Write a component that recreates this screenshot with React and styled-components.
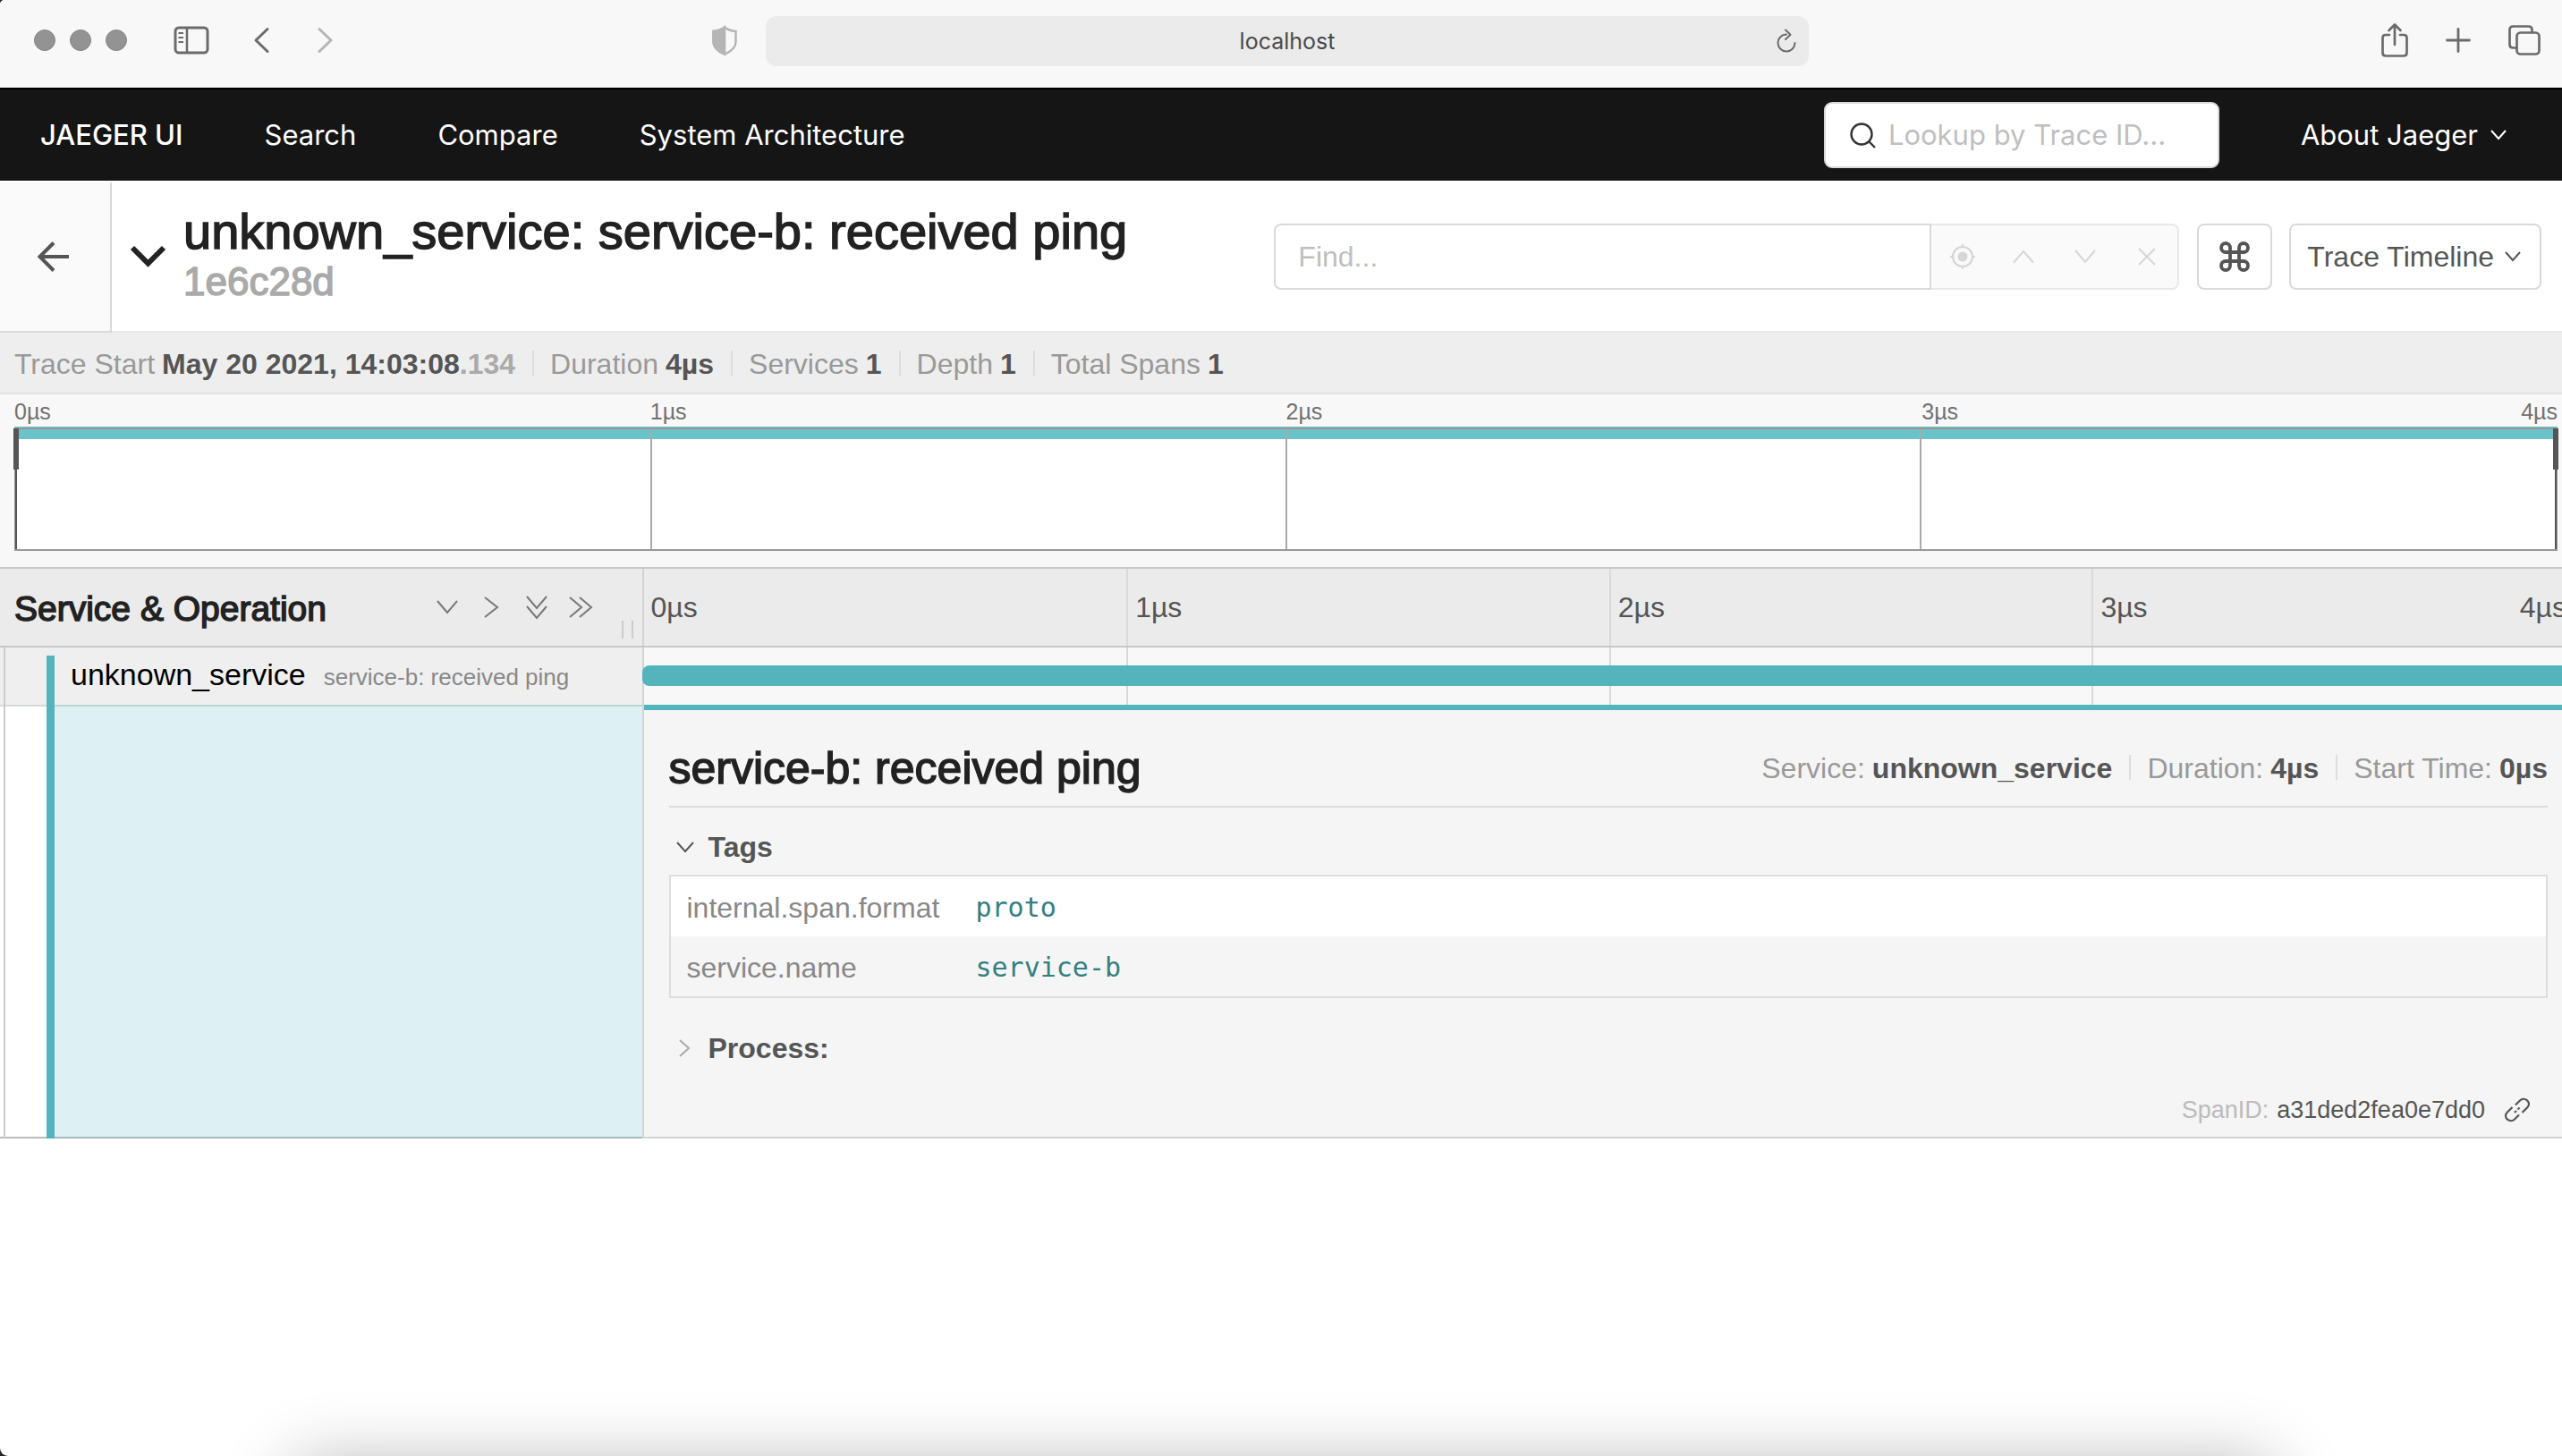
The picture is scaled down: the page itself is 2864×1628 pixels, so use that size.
import React from 'react';
import styled, { createGlobalStyle, css } from 'styled-components';

const helvetica = '"Liberation Sans", Arial, sans-serif';
const system = 'Inter, "Liberation Sans", sans-serif';
const mono = '"DejaVu Sans Mono", monospace';

const teal = '#54b4bc';
const ink = '#222';
const text = '#555';
const muted = '#999';

const GlobalStyle = createGlobalStyle`
  *, *::before, *::after { box-sizing: border-box; }
  body { margin: 0; background: #2b2625; font-family: ${helvetica}; font-size: 32px; line-height: 38px; color: ${text}; }
  h1, h2, h3, p, dl, dd { margin: 0; font: inherit; }
  button, input { font: inherit; color: inherit; margin: 0; padding: 0; border: 0; background: none; border-radius: 0; }
  button { cursor: pointer; display: inline-flex; align-items: center; justify-content: center; }
  input { outline: 0; min-width: 0; }
  a { color: inherit; text-decoration: none; }
  svg { display: block; flex: none; overflow: visible; }
`;

/* Liberation Sans has no medium weight; a thin stroke in the text colour stands in for it. */
const mediumWeight = css`
  font-weight: 400;
  -webkit-text-stroke: 1.5px currentColor;
`;

const Page = styled.div`
  position: relative;
  min-height: 100vh;
  overflow: hidden;
  background: #fff;
  border-radius: 5px 0 0 9px;
`;

const DockShadow = styled.div`
  position: absolute;
  left: 330px;
  right: 325px;
  bottom: -212px;
  height: 200px;
  box-shadow: 0 0 80px rgba(0, 0, 0, 0.32);
`;

/* Icons */

const Svg = styled.svg`
  fill: none;
  stroke: currentColor;
  stroke-width: ${(p) => p.$weight || 2};
  stroke-linecap: ${(p) => (p.$round ? 'round' : 'butt')};
  stroke-linejoin: ${(p) => (p.$round ? 'round' : 'miter')};
`;

const Icon = ({ w, h, weight, round, children }) => (
  <Svg width={w} height={h} viewBox={`0 0 ${w} ${h}`} $weight={weight} $round={round} aria-hidden="true">
    {children}
  </Svg>
);

const ChevronDown = ({ w = 18, h = 12, weight = 2 }) => (
  <Icon w={w} h={h} weight={weight}>
    <path d={`M1 1L${w / 2} ${h - 2}L${w - 1} 1`} />
  </Icon>
);

const ChevronRight = ({ w = 16, h = 24, weight = 2 }) => (
  <Icon w={w} h={h} weight={weight}>
    <path d={`M1 1L${w - 2} ${h / 2}L1 ${h - 1}`} />
  </Icon>
);

/* Browser chrome */

const BrowserBar = styled.header`
  display: grid;
  grid-template-columns: 1fr minmax(400px, 1166px) 1fr;
  align-items: center;
  height: 98px;
  padding: 0 24px 6px 38px;
  background: #f8f8f8;
  color: #6b6b6b;
`;

const ChromeSide = styled.div`
  display: flex;
  align-items: center;
  justify-content: ${(p) => (p.$end ? 'flex-end' : 'flex-start')};
  gap: ${(p) => p.$gap || 0}px;
  padding-bottom: 2px;
`;

const WindowDots = styled.div`
  display: flex;
  gap: 16px;
  margin-right: 52px;
`;

const Dot = styled.span`
  width: 24px;
  height: 24px;
  border: 1px solid #858585;
  border-radius: 50%;
  background: #939393;
`;

const ChromeButton = styled.button`
  color: ${(p) => (p.$faded ? '#b5b5b5' : '#6b6b6b')};
  margin-right: ${(p) => p.$after || 0}px;
  margin-left: ${(p) => (p.$push ? 'auto' : 0)};
`;

const AddressBar = styled.div`
  display: flex;
  align-items: center;
  height: 56px;
  padding: 0 14px 0 36px;
  border-radius: 12px;
  background: #ebebeb;
`;

const AddressInput = styled.input`
  flex: 1;
  font-family: ${system};
  font-size: 25px;
  text-align: center;
  color: #4a4a4a;
`;

/* Top navigation */

const NavBar = styled.nav`
  display: flex;
  align-items: center;
  gap: 91px;
  height: 104px;
  padding: 0 62px 0 45px;
  border-top: 2px solid #000;
  background: #151515;
  color: #fff;
  font-family: ${system};
  font-size: 31px;
`;

const NavLink = styled.a`
  font-weight: ${(p) => (p.$brand ? 500 : 400)};
`;

const Lookup = styled.label`
  display: flex;
  align-items: center;
  gap: 14px;
  width: 442px;
  height: 74px;
  margin-left: auto;
  padding: 0 27px;
  border: 2px solid #d9d9d9;
  border-radius: 9px;
  background: #fff;
  color: #333;
`;

const LookupInput = styled.input`
  flex: 1;
  &::placeholder { color: #bfbfbf; opacity: 1; }
`;

const AboutButton = styled.button`
  gap: 14px;
`;

/* Trace header */

const TraceHeader = styled.section`
  display: flex;
  align-items: center;
  height: 170px;
  padding: 2px 23px 0 0;
  border-bottom: 2px solid #e8e8e8;
`;

const BackButton = styled.button`
  align-self: stretch;
  width: 125px;
  margin-bottom: -2px;
  padding-right: 4px;
  border: solid #d9d9d9;
  border-width: 0 2px 2px 0;
  background: #fafafa;
`;

const TitleToggle = styled.button`
  margin: 0 20px 0 21px;
  color: ${ink};
`;

const TitleBlock = styled.div`
  display: flex;
  flex-direction: column;
  gap: 4px;
  margin-right: auto;
  padding-bottom: 4px;
`;

const Title = styled.h1`
  ${mediumWeight}
  font-size: 56px;
  line-height: 56px;
  color: ${ink};
`;

const TraceId = styled.p`
  ${mediumWeight}
  font-size: 44px;
  line-height: 48px;
  color: #aaa;
`;

const FindGroup = styled.div`
  display: flex;
  width: 1012px;
  height: 74px;
  margin-right: 20px;
`;

const FindInput = styled.input`
  flex: 1;
  padding-left: 25px;
  border: 2px solid #d9d9d9;
  border-radius: 8px 0 0 8px;
  &::placeholder { color: #bfbfbf; opacity: 1; }
`;

const FindActions = styled.div`
  display: flex;
  width: 277px;
  border: 2px solid #e8e8e8;
  border-left: 0;
  border-radius: 0 8px 8px 0;
  background: #fafafa;
  color: #d6d6d6;
`;

const FindAction = styled.button`
  flex: 1;
`;

const OutlineButton = styled.button`
  height: 74px;
  padding: ${(p) => (p.$square ? '0 22px' : '0 21px 0 18px')};
  gap: 12px;
  margin-left: ${(p) => (p.$square ? 0 : 19)}px;
  border: 2px solid #d9d9d9;
  border-radius: 8px;
  background: #fff;
`;

/* Facts such as duration and services */

const Facts = styled.dl`
  display: flex;
`;

const Fact = styled.div`
  display: flex;
  gap: 8px;
  & + & { margin-left: 19px; }
  & + &::before {
    content: '';
    width: 2px;
    height: 28px;
    margin: 4px 10px 0 0;
    background: #ddd;
  }
`;

const FactLabel = styled.dt`
  color: ${muted};
`;

const FactValue = styled.dd`
  font-weight: 700;
`;

const Millis = styled.span`
  color: #aaa;
`;

const SummaryBar = styled.section`
  padding: 16px 16px 13px;
  border-bottom: 2px solid #e2e2e2;
  background: #eee;
`;

/* Minimap */

const Minimap = styled.section`
  padding: 0 5px 18px 16px;
  border-bottom: 2px solid #c8c8c8;
  background: #f8f8f8;
`;

const MinimapTicks = styled.div`
  display: grid;
  grid-template-columns: repeat(4, 1fr);
  height: 37px;
  font-size: 25px;
  color: #717171;
`;

const MinimapTick = styled.div`
  display: flex;
  justify-content: space-between;
`;

const MinimapGraph = styled.div`
  position: relative;
  display: grid;
  grid-template-columns: repeat(4, 1fr);
  height: 138px;
  border: 2px solid ${muted};
  background: linear-gradient(#6bc3ca 11px, #fff 11px);
  box-shadow: 0 -1px #6bc3ca;
`;

const MinimapCell = styled.div`
  & + & {
    margin-left: -1px;
    border-left: 2px solid #aaa;
  }
`;

const Scrubber = styled.div`
  position: absolute;
  top: 0;
  bottom: 0;
  ${(p) => p.$side}: -1px;
  width: 2px;
  background: ${text};
  &::before {
    content: '';
    position: absolute;
    top: -1px;
    left: -2px;
    width: 6px;
    height: 46px;
    background: ${text};
  }
`;

/* Timeline */

const TimelineView = styled.main`
  width: calc(100% + 14px);
`;

const TwoColumns = styled.div`
  display: grid;
  grid-template-columns: minmax(0, 1fr) minmax(0, 3fr);
`;

const TimelineHeader = styled(TwoColumns)`
  height: 88px;
  border-bottom: 2px solid #c8c8c8;
  background: #ebebeb;
`;

const NameHeader = styled.div`
  display: flex;
  align-items: center;
  padding: 0 10px 0 16px;
  border-right: 2px solid #d3d3d3;
`;

const NameHeading = styled.h2`
  ${mediumWeight}
  flex: 1;
  padding-top: 4px;
  font-size: 39px;
  color: ${ink};
`;

const ExpandButton = styled.button`
  width: 50px;
  height: 50px;
  color: #777;
`;

const ResizeGrip = styled.div`
  align-self: flex-end;
  width: 13px;
  height: 20px;
  margin: 0 0 8px 20px;
  border: solid #ccc;
  border-width: 0 2px;
`;

const TickGrid = styled.div`
  display: grid;
  grid-template-columns: repeat(4, 1fr);
`;

const RowTicks = styled(TickGrid)`
  grid-area: 1 / 1;
`;

const Tick = styled.div`
  display: flex;
  align-items: center;
  justify-content: space-between;
  padding: 0 9px 0 8px;
  & + & { border-left: 2px solid #d9d9d9; }
`;

const NameColumn = styled.div`
  display: grid;
  grid-template-columns: 6px 46px 9px 1fr;
  grid-template-rows: 66px 1fr;
  border-right: 2px solid #d3d3d3;
`;

const SpanName = styled.div`
  grid-area: 1 / 1 / 2 / -1;
  display: flex;
  align-items: baseline;
  gap: 20px;
  padding-left: 79px;
  line-height: 60px;
  border-bottom: 2px solid #d6d9d9;
  background: #efefef;
`;

const ServiceName = styled.span`
  font-size: 34px;
  color: #000;
`;

const OperationName = styled.span`
  font-size: 26px;
  color: #888;
`;

const IndentGuide = styled.div`
  grid-area: 1 / 1 / -1 / 2;
  border-right: 2px solid #ccc;
  border-bottom: 2px solid #bbb;
`;

const IndentGap = styled.div`
  grid-area: 2 / 2;
  border-bottom: 2px solid #bbb;
`;

const ServiceRail = styled.div`
  grid-area: 1 / 3 / -1 / 4;
  margin-top: 9px;
  background: ${teal};
`;

const ServiceTint = styled.div`
  grid-area: 2 / 4;
  margin-top: -2px;
  border-top: 2px solid #bfd6d6;
  border-bottom: 2px solid #a5bbbd;
  background: #ddf0f3;
`;

const SpanRow = styled.div`
  display: grid;
  grid-template-rows: 64px;
  background: #f8f8f8;
`;

const SpanBar = styled.div`
  grid-area: 1 / 1;
  height: 23px;
  margin: 20px 0 0 -2px;
  border-radius: 8px 0 0 8px;
  background: ${teal};
  z-index: 1;
`;

const Detail = styled.section`
  padding: 0 30px 11px 28px;
  border-top: 6px solid ${teal};
  border-bottom: 2px solid #d3d3d3;
  background: #f5f5f5;
`;

const DetailHeader = styled.div`
  display: flex;
  align-items: center;
  justify-content: space-between;
  padding: 37px 0 14px;
  border-bottom: 2px solid #ddd;
`;

const DetailTitle = styled.h2`
  ${mediumWeight}
  font-size: 50px;
  line-height: 56px;
  color: ${ink};
`;

const Accordion = styled.button`
  justify-content: flex-start;
  gap: 16px;
  width: 100%;
  padding: ${(p) => (p['aria-expanded'] ? '25px 8px 12px' : '37px 8px 0')};
  font-weight: 700;
`;

const AccordionIcon = styled.span`
  display: flex;
  justify-content: center;
  width: 20px;
  color: ${(p) => (p.$open ? text : '#aaa')};
`;

const TagTable = styled.table`
  width: 100%;
  border: 2px solid #ddd;
  border-collapse: separate;
  border-spacing: 0;
  tr:first-child { background: #fff; }
`;

const TagKey = styled.th`
  width: 341px;
  padding: 16px 0 13px 18px;
  font-weight: 400;
  text-align: left;
  color: #888;
`;

const TagValue = styled.td`
  padding: 16px 0 13px;
  font-family: ${mono};
  font-size: 30px;
  color: #348080;
`;

const SpanFooter = styled.div`
  display: flex;
  align-items: center;
  justify-content: flex-end;
  gap: 9px;
  margin-top: 31px;
  padding-right: 20px;
  font-size: 27px;
`;

const SpanIdLabel = styled.span`
  color: #bbb;
`;

const CopyLink = styled.a`
  margin-left: 13px;
`;

const summary = [
  ['Trace Start', <>May 20 2021, 14:03:08<Millis>.134</Millis></>],
  ['Duration', '4µs'],
  ['Services', '1'],
  ['Depth', '1'],
  ['Total Spans', '1'],
];

const spanFacts = [
  ['Service:', 'unknown_service'],
  ['Duration:', '4µs'],
  ['Start Time:', '0µs'],
];

const tags = [
  ['internal.span.format', 'proto'],
  ['service.name', 'service-b'],
];

const ticks = ['0µs', '1µs', '2µs', '3µs'];
const lastTick = '4µs';

const FactList = ({ items }) => (
  <Facts>
    {items.map(([label, value]) => (
      <Fact key={label}>
        <FactLabel>{label}</FactLabel>
        <FactValue>{value}</FactValue>
      </Fact>
    ))}
  </Facts>
);

const Browser = () => (
  <BrowserBar>
    <ChromeSide>
      <WindowDots>
        <Dot />
        <Dot />
        <Dot />
      </WindowDots>
      <ChromeButton aria-label="Sidebar" $after={50}>
        <Icon w={40} h={32} weight={3}>
          <rect x="2" y="2" width="36" height="28" rx="4" />
          <path d="M15 2V30" strokeWidth="2.5" />
          <path d="M5.500 8H11M5.500 13H11M5.500 18H11" strokeWidth="2" />
        </Icon>
      </ChromeButton>
      <ChromeButton aria-label="Back" $after={54}>
        <Icon w={17} h={28} weight={3} round>
          <path d="M15 1.500L2 14L15 26.500" />
        </Icon>
      </ChromeButton>
      <ChromeButton aria-label="Forward" $faded>
        <Icon w={17} h={28} weight={3} round>
          <path d="M2 1.500L15 14L2 26.500" />
        </Icon>
      </ChromeButton>
      <ChromeButton aria-label="Privacy report" $faded $push $after={32}>
        <Icon w={28} h={33} weight={2.5}>
          <path d="M14 1.500C17 4 21 5.500 26.500 6V18C26.500 25 20 29 14 31.500C8 29 1.500 25 1.500 18V6C7 5.500 11 4 14 1.500Z" />
          <path d="M14 1.500C11 4 7 5.500 1.500 6V18C1.500 25 8 29 14 31.500Z" fill="currentColor" />
        </Icon>
      </ChromeButton>
    </ChromeSide>
    <AddressBar>
      <AddressInput aria-label="Address" defaultValue="localhost" />
      <ChromeButton aria-label="Reload">
        <Icon w={22} h={26} weight={2} round>
          <path d="M11 5.500A9.500 9.500 0 1 0 20.500 15" />
          <path d="M10 0.500L15.500 5.800L10 11" />
        </Icon>
      </ChromeButton>
    </AddressBar>
    <ChromeSide $end $gap={42}>
      <ChromeButton aria-label="Share">
        <Icon w={30} h={38} weight={2.7} round>
          <path d="M9 13H5C3 13 1.500 14 1.500 16V33C1.500 35.500 3 36.500 5 36.500H25C27 36.500 28.500 35.500 28.500 33V16C28.500 14 27 13 25 13H21" />
          <path d="M15 24V2M8.500 8L15 1.500L21.500 8" />
        </Icon>
      </ChromeButton>
      <ChromeButton aria-label="New tab">
        <Icon w={28} h={28} weight={2.8} round>
          <path d="M14 1.500V26.500M1.500 14H26.500" />
        </Icon>
      </ChromeButton>
      <ChromeButton aria-label="Tabs">
        <Icon w={36} h={34} weight={2.7} round>
          <rect x="9.500" y="8.500" width="25" height="24" rx="4" />
          <path d="M9 25.500H5.500C3 25.500 1.500 24 1.500 22V5C1.500 3 3 1.500 5.500 1.500H22.500C25 1.500 26.500 3 26.500 5V8" />
        </Icon>
      </ChromeButton>
    </ChromeSide>
  </BrowserBar>
);

const Navigation = () => (
  <NavBar>
    <NavLink href="#home" $brand>JAEGER UI</NavLink>
    <NavLink href="#search">Search</NavLink>
    <NavLink href="#compare">Compare</NavLink>
    <NavLink href="#architecture">System Architecture</NavLink>
    <Lookup>
      <Icon w={29} h={29} weight={2.4}>
        <circle cx="13" cy="13" r="11.500" />
        <path d="M21 21L28 28" />
      </Icon>
      <LookupInput aria-label="Lookup by Trace ID" placeholder="Lookup by Trace ID..." />
    </Lookup>
    <AboutButton>
      About Jaeger
      <ChevronDown />
    </AboutButton>
  </NavBar>
);

const Header = () => (
  <TraceHeader>
    <BackButton aria-label="Back to results">
      <Icon w={35} h={34} weight={4}>
        <path d="M35 17H3M18 1.500L2.500 17L18 32.500" />
      </Icon>
    </BackButton>
    <TitleToggle aria-label="Collapse header">
      <Icon w={39} h={24} weight={6}>
        <path d="M2 2L19.500 19.500L37 2" />
      </Icon>
    </TitleToggle>
    <TitleBlock>
      <Title>unknown_service: service-b: received ping</Title>
      <TraceId>1e6c28d</TraceId>
    </TitleBlock>
    <FindGroup>
      <FindInput aria-label="Find" placeholder="Find..." />
      <FindActions>
        <FindAction aria-label="Locate">
          <Icon w={28} h={28} weight={2.2}>
            <circle cx="14" cy="14" r="11" />
            <circle cx="14" cy="14" r="5.500" fill="currentColor" stroke="none" />
            <path d="M14 0V4M14 24V28M0 14H4M24 14H28" />
          </Icon>
        </FindAction>
        <FindAction aria-label="Previous">
          <Icon w={24} h={16}>
            <path d="M1 14.500L12 2L23 14.500" />
          </Icon>
        </FindAction>
        <FindAction aria-label="Next">
          <ChevronDown w={24} h={16} />
        </FindAction>
        <FindAction aria-label="Clear">
          <Icon w={20} h={20}>
            <path d="M1 1L19 19M19 1L1 19" />
          </Icon>
        </FindAction>
      </FindActions>
    </FindGroup>
    <OutlineButton aria-label="Keyboard shortcuts" $square>
      <Icon w={36} h={36} weight={3.8}>
        <path d="M13 13V7.500A5 5 0 1 0 8 13H28A5 5 0 1 0 23 8V28A5 5 0 1 0 28 23H8A5 5 0 1 0 13 28Z" />
      </Icon>
    </OutlineButton>
    <OutlineButton>
      Trace Timeline
      <ChevronDown />
    </OutlineButton>
  </TraceHeader>
);

const MinimapView = () => (
  <Minimap>
    <MinimapTicks>
      {ticks.map((tick, i) => (
        <MinimapTick key={tick}>
          <span>{tick}</span>
          {i === 3 && <span>{lastTick}</span>}
        </MinimapTick>
      ))}
    </MinimapTicks>
    <MinimapGraph>
      {ticks.map((tick) => (
        <MinimapCell key={tick} />
      ))}
      <Scrubber $side="left" />
      <Scrubber $side="right" />
    </MinimapGraph>
  </Minimap>
);

const SpanDetail = () => (
  <Detail>
    <DetailHeader>
      <DetailTitle>service-b: received ping</DetailTitle>
      <FactList items={spanFacts} />
    </DetailHeader>
    <Accordion aria-expanded={true}>
      <AccordionIcon $open>
        <ChevronDown w={20} h={13} />
      </AccordionIcon>
      Tags
    </Accordion>
    <TagTable>
      <tbody>
        {tags.map(([key, value]) => (
          <tr key={key}>
            <TagKey scope="row">{key}</TagKey>
            <TagValue>{value}</TagValue>
          </tr>
        ))}
      </tbody>
    </TagTable>
    <Accordion aria-expanded={false}>
      <AccordionIcon>
        <ChevronRight w={13} h={20} />
      </AccordionIcon>
      Process:
    </Accordion>
    <SpanFooter>
      <SpanIdLabel>SpanID:</SpanIdLabel>
      <span>a31ded2fea0e7dd0</span>
      <CopyLink href="#span" aria-label="Link to this span">
        <Icon w={28} h={28} weight={2.2}>
          <path d="M12 8.500L17 3.500C22 -1.500 30.500 5.500 25.500 11L19.500 17" />
          <path d="M16 19.500L11 24.500C6 29.500 -2.500 22.500 2.500 17L8.500 11" />
          <path d="M11 17L13 15M14.500 13.500L16.500 11.500" />
        </Icon>
      </CopyLink>
    </SpanFooter>
  </Detail>
);

const Timeline = () => (
  <TimelineView>
    <TimelineHeader>
      <NameHeader>
        <NameHeading>Service &amp; Operation</NameHeading>
        <ExpandButton aria-label="Expand one level">
          <ChevronDown w={24} h={16} />
        </ExpandButton>
        <ExpandButton aria-label="Collapse one level">
          <ChevronRight w={17} h={24} />
        </ExpandButton>
        <ExpandButton aria-label="Expand all">
          <Icon w={24} h={27}>
            <path d="M1 1L12 14L23 1M1 12L12 25L23 12" />
          </Icon>
        </ExpandButton>
        <ExpandButton aria-label="Collapse all">
          <Icon w={27} h={24}>
            <path d="M1 1L14 12L1 23M12 1L25 12L12 23" />
          </Icon>
        </ExpandButton>
        <ResizeGrip />
      </NameHeader>
      <TickGrid>
        {ticks.map((tick, i) => (
          <Tick key={tick}>
            <span>{tick}</span>
            {i === 3 && <span>{lastTick}</span>}
          </Tick>
        ))}
      </TickGrid>
    </TimelineHeader>
    <TwoColumns>
      <NameColumn>
        <SpanName>
          <ServiceName>unknown_service</ServiceName>
          <OperationName>service-b: received ping</OperationName>
        </SpanName>
        <IndentGuide />
        <IndentGap />
        <ServiceRail />
        <ServiceTint />
      </NameColumn>
      <div>
        <SpanRow>
          <RowTicks>
            {ticks.map((tick) => (
              <Tick key={tick} />
            ))}
          </RowTicks>
          <SpanBar />
        </SpanRow>
        <SpanDetail />
      </div>
    </TwoColumns>
  </TimelineView>
);

export default function App() {
  return (
    <Page>
      <GlobalStyle />
      <Browser />
      <Navigation />
      <Header />
      <SummaryBar>
        <FactList items={summary} />
      </SummaryBar>
      <MinimapView />
      <Timeline />
      <DockShadow />
    </Page>
  );
}
